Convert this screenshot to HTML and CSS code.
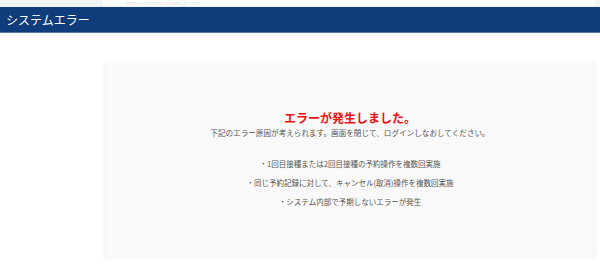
FILE: index.html
```html
<!DOCTYPE html>
<html lang="ja">

<head>
  <meta charset="utf-8" />
  <title>システムエラー</title>
  <link rel="stylesheet" href="styles.css">
</head>

<body>
  <div class="chrome">
    <div class="address">https://vaccines.sciseed.jp/error</div>
  </div>
  <div class="header">システムエラー</div>
  <div class="contenido">
    <div class="tarjeta">
      <div class="titulo">エラーが発生しました。</div>
      <div class="subtitulo">下記のエラー原因が考えられます。画面を閉じて、ログインしなおしてください。</div>
      <ul class="causas">
        <li>・1回目接種または2回目接種の予約操作を複数回実施</li>
        <li>・同じ予約記録に対して、キャンセル(取消)操作を複数回実施</li>
        <li>・システム内部で予期しないエラーが発生</li>
      </ul>
    </div>
  </div>
</body>

</html>
```

FILE: styles.css
```css
body {
  margin: 0;
  font-family: "Noto Sans CJK JP", "Noto Sans", sans-serif;
  background: #fff;
}

.chrome {
  height: 7px;
  background: #f1f3f4;
  display: flex;
  justify-content: flex-end;
  overflow: hidden;
}

.address {
  width: 492px;
  margin-right: 5px;
  height: 6px;
  background: #fff;
  border-radius: 0 0 3px 3px;
  color: #e2e2e2;
  font-size: 5px;
  line-height: 6px;
  padding-left: 22px;
  box-sizing: border-box;
}

.header {
  height: 25px;
  background: #0f3d7c;
  border-bottom: 1px solid #5474a3;
  color: #fff;
  font-size: 12px;
  line-height: 25px;
  padding-left: 6px;
}

.contenido {
  padding: 29px 5px 0 105px;
}

.tarjeta {
  background: #f9f9f9;
  border-radius: 3px;
  box-shadow: 0 1px 3px rgba(0, 0, 0, 0.12);
  height: 197px;
  box-sizing: border-box;
  padding-top: 48px;
  text-align: center;
}

.titulo {
  color: #f40f0f;
  font-weight: bold;
  font-size: 12px;
  line-height: 16px;
}

.subtitulo {
  color: #555;
  font-size: 7.6px;
  line-height: 14px;
}

.causas {
  list-style: none;
  margin: 14px 0 0;
  padding: 0;
  color: #555;
  font-size: 7.5px;
  line-height: 19px;
}
```
